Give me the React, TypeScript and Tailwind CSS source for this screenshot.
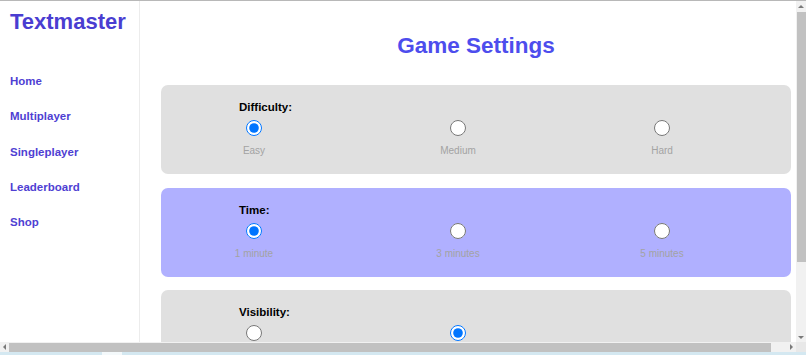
import React from "react";

type Option = { label?: string; checked?: boolean };

interface SettingCardProps {
  title: string;
  name: string;
  options: Option[];
  tint?: "grey" | "blue";
}

const navLinks = ["Home", "Multiplayer", "Singleplayer", "Leaderboard", "Shop"];

function SettingCard({ title, name, options, tint = "grey" }: SettingCardProps) {
  return (
    <div
      className={`rounded-[7px] pl-[78px] pt-[15px] pb-[17px] ${
        tint === "blue" ? "bg-[#b0b0ff]" : "bg-[#e0e0e0]"
      }`}
    >
      <p className="text-[11.5px] leading-[14px] font-bold text-black">{title}</p>
      <div className="flex gap-[174px] mt-[6px]">
        {options.map((opt, i) => (
          <label key={i} className="w-[30px] flex flex-col items-center">
            <input
              type="radio"
              name={name}
              defaultChecked={opt.checked}
              className="w-4 h-4 m-0 accent-[#0075ff]"
            />
            {opt.label ? (
              <span className="mt-[9px] text-[10px] leading-[12px] text-[#a3a3a3] whitespace-nowrap">
                {opt.label}
              </span>
            ) : (
              <span className="mt-[9px] h-[12px]" />
            )}
          </label>
        ))}
      </div>
    </div>
  );
}

function Arrow({ dir }: { dir: "up" | "down" | "left" | "right" }) {
  const points = {
    up: "1,5 4,2 7,5",
    down: "1,3 4,6 7,3",
    left: "5,1 2,4 5,7",
    right: "3,1 6,4 3,7",
  }[dir];
  return (
    <svg width="8" height="8" viewBox="0 0 8 8">
      <polygon points={points} fill="#7a7a7a" />
    </svg>
  );
}

export default function App() {
  return (
    <div
      className="w-[806px] h-[355px] flex flex-col overflow-hidden bg-white border-t border-[#b8b8b8]"
      style={{ fontFamily: '"Liberation Sans", Arial, sans-serif' }}
    >
      <div className="flex h-[341px]">
        {/* viewport */}
        <div className="w-[796px] overflow-hidden">
          <div className="w-[812px] flex">
            <aside className="w-[140px] shrink-0 h-[430px] border-r border-[#ececec] px-[10px] pt-[8px]">
              <h1 className="text-[22px] leading-[26px] font-bold text-[#4a3dd1]">Textmaster</h1>
              <nav className="mt-[39px] flex flex-col gap-[21.25px]">
                {navLinks.map((link) => (
                  <a
                    key={link}
                    href="#"
                    className="text-[11.5px] leading-[14px] font-bold text-[#4f3fd3]"
                  >
                    {link}
                  </a>
                ))}
              </nav>
            </aside>

            <main className="w-[672px] px-[21px] pt-[32px]">
              <h2 className="text-center text-[22.5px] leading-[26px] font-bold text-[#4d4ded]">
                Game Settings
              </h2>
              <div className="mt-[26px] flex flex-col gap-[13.5px]">
                <SettingCard
                  title="Difficulty:"
                  name="difficulty"
                  options={[{ label: "Easy", checked: true }, { label: "Medium" }, { label: "Hard" }]}
                />
                <SettingCard
                  title="Time:"
                  name="time"
                  tint="blue"
                  options={[
                    { label: "1 minute", checked: true },
                    { label: "3 minutes" },
                    { label: "5 minutes" },
                  ]}
                />
                <SettingCard
                  title="Visibility:"
                  name="visibility"
                  options={[{}, { checked: true }]}
                />
              </div>
            </main>
          </div>
        </div>

        {/* vertical scrollbar */}
        <div className="w-[10px] bg-[#f1f1f1] flex flex-col items-center">
          <div className="h-[11px] flex items-center justify-center">
            <Arrow dir="up" />
          </div>
          <div className="w-[9px] h-[250px] bg-[#c1c1c1]" />
          <div className="flex-1" />
          <div className="h-[11px] flex items-center justify-center">
            <Arrow dir="down" />
          </div>
        </div>
      </div>

      {/* horizontal scrollbar */}
      <div className="h-[10px] flex bg-[#f1f1f1]">
        <div className="w-[9px] flex items-center justify-center">
          <Arrow dir="left" />
        </div>
        <div className="w-[762px] h-[9px] mt-[1px] bg-[#c1c1c1]" />
        <div className="flex-1" />
        <div className="w-[11px] flex items-center justify-center">
          <Arrow dir="right" />
        </div>
        <div className="w-[10px] bg-[#e8e8e8]" />
      </div>

      {/* taskbar edge */}
      <div className="h-[3px] flex bg-[#d4e8f1]">
        <div className="w-[102px]" />
        <div className="w-[20px] bg-[#f4f9fb]" />
      </div>
    </div>
  );
}
